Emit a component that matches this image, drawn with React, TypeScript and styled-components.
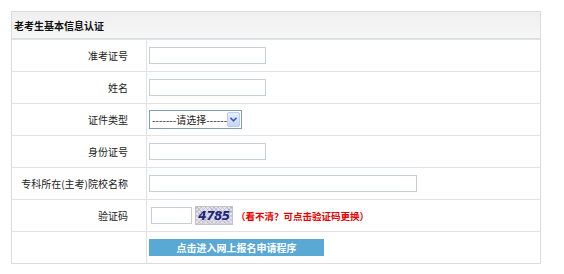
import styled, { createGlobalStyle } from 'styled-components';

const GlobalStyle = createGlobalStyle`
  html, body {
    margin: 0;
    padding: 0;
    background: #ffffff;
  }
  body {
    font-family: "Noto Sans CJK SC", "DejaVu Sans", sans-serif;
    font-size: 10px;
    color: #333333;
  }
`;

const Page = styled.div`
  padding: 11px 0 0 11px;
`;

const Panel = styled.div`
  width: 528px;
  border: 1px solid #d9dde2;
  background: #ffffff;
`;

const Header = styled.div`
  height: 26px;
  display: flex;
  align-items: center;
  padding-left: 2px;
  background: linear-gradient(#efefef, #f7f7f7);
  border-bottom: 1px solid #d9dde2;
  font-weight: 700;
  font-size: 10px;
  color: #111111;
`;

const Row = styled.div`
  display: grid;
  grid-template-columns: 135px 1fr;
  height: 31px;
  border-top: 1px solid #dfe3e8;
  &:first-of-type {
    border-top: none;
    height: 32px;
  }
`;

const Label = styled.div`
  display: flex;
  align-items: center;
  justify-content: flex-end;
  padding-right: 18px;
  border-right: 1px solid #dfe3e8;
  white-space: nowrap;
  font-size: 10px;
  color: #222222;
`;

const Field = styled.div`
  display: flex;
  align-items: center;
  gap: 3px;
  padding-left: 2px;
`;

const TextInput = styled.input<{ $w: number; $ml?: number }>`
  box-sizing: border-box;
  width: ${(p) => p.$w}px;
  height: 17px;
  margin: 0 0 0 ${(p) => p.$ml ?? 0}px;
  padding: 0 2px;
  border: 1px solid #c9ced4;
  background: #ffffff;
  outline: none;
  font-size: 10px;
`;

const SelectBox = styled.div`
  box-sizing: border-box;
  width: 93px;
  height: 19px;
  display: flex;
  align-items: stretch;
  border: 1px solid #7f9db9;
  background: #ffffff;
`;

const NativeSelect = styled.select`
  flex: 1;
  min-width: 0;
  appearance: none;
  border: none;
  outline: none;
  background: transparent;
  padding: 0 0 0 2px;
  font-family: "Noto Sans CJK SC", "DejaVu Sans", sans-serif;
  font-size: 10px;
  color: #222222;
`;

const ArrowBtn = styled.span`
  width: 13px;
  margin: 1px 1px 1px 0;
  display: flex;
  align-items: center;
  justify-content: center;
  background: linear-gradient(#e8effc, #c6d5f6);
  border: 1px solid #b8cbf0;
  border-radius: 2px;
  box-sizing: border-box;
`;

const Captcha = styled.div`
  width: 38px;
  height: 19px;
  display: flex;
  align-items: center;
  justify-content: center;
  box-sizing: border-box;
  border: 1px solid #c2c2cc;
  background:
    repeating-linear-gradient(45deg, rgba(110, 110, 140, 0.22) 0 1px, transparent 1px 3px),
    repeating-linear-gradient(-45deg, rgba(140, 110, 140, 0.2) 0 1px, transparent 1px 3px),
    #e4e4ec;
  font-family: "DejaVu Sans", sans-serif;
  font-style: italic;
  font-weight: 700;
  font-size: 12px;
  letter-spacing: -0.5px;
  color: #1c2480;
`;

const Hint = styled.span`
  color: #e40000;
  font-weight: 700;
  font-size: 9.5px;
  white-space: nowrap;
`;

const SubmitButton = styled.button`
  width: 175px;
  height: 17px;
  padding: 0;
  border: none;
  background: #5aa8d4;
  color: #ffffff;
  font-family: "Noto Sans CJK SC", "DejaVu Sans", sans-serif;
  font-size: 10px;
  font-weight: 700;
  line-height: 17px;
  cursor: pointer;
`;

const rows = [
  { label: '准考证号', width: 117 },
  { label: '姓名', width: 117 },
];

export default function App() {
  return (
    <Page>
      <GlobalStyle />
      <Panel>
        <Header>老考生基本信息认证</Header>
        {rows.map((r) => (
          <Row key={r.label}>
            <Label>{r.label}</Label>
            <Field>
              <TextInput $w={r.width} />
            </Field>
          </Row>
        ))}
        <Row>
          <Label>证件类型</Label>
          <Field>
            <SelectBox>
              <NativeSelect defaultValue="">
                <option value="">-------请选择-------</option>
                <option value="1">身份证</option>
              </NativeSelect>
              <ArrowBtn>
                <svg width="7" height="5" viewBox="0 0 7 5">
                  <path d="M0.5 0.8 L3.5 3.8 L6.5 0.8" stroke="#3a5fb8" strokeWidth="1.6" fill="none" />
                </svg>
              </ArrowBtn>
            </SelectBox>
          </Field>
        </Row>
        <Row>
          <Label>身份证号</Label>
          <Field>
            <TextInput $w={117} />
          </Field>
        </Row>
        <Row>
          <Label>专科所在(主考)院校名称</Label>
          <Field>
            <TextInput $w={268} />
          </Field>
        </Row>
        <Row>
          <Label>验证码</Label>
          <Field>
            <TextInput $w={41} $ml={2} />
            <Captcha>4785</Captcha>
            <Hint>（看不清？可点击验证码更换）</Hint>
          </Field>
        </Row>
        <Row>
          <Label />
          <Field>
            <SubmitButton type="button">点击进入网上报名申请程序</SubmitButton>
          </Field>
        </Row>
      </Panel>
    </Page>
  );
}
